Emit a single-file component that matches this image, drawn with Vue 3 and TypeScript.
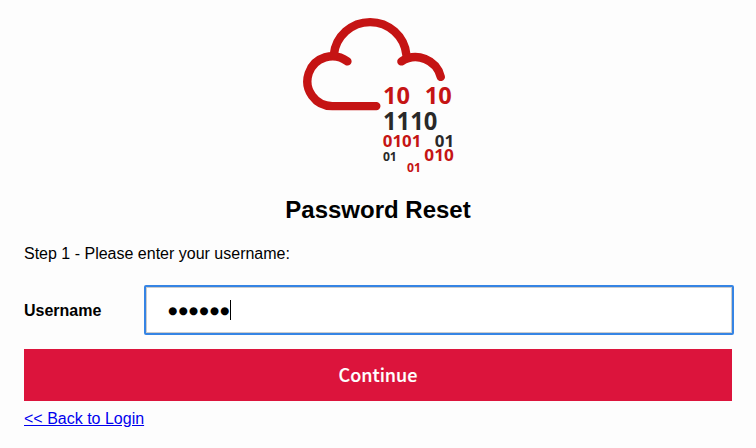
<script setup lang="ts">
import { ref } from 'vue'

interface Digits {
  text: string
  x: number
  y: number
  size: number
  width: number
  dark?: boolean
}

const digits: Digits[] = [
  { text: '10', x: 383, y: 103.8, size: 23.5, width: 27 },
  { text: '10', x: 424.7, y: 103.8, size: 23.5, width: 27 },
  { text: '1110', x: 383, y: 129.5, size: 24.2, width: 54.4, dark: true },
  { text: '0101', x: 382.8, y: 147.2, size: 16.6, width: 38.6 },
  { text: '01', x: 434.8, y: 147.2, size: 16.6, width: 19.3, dark: true },
  { text: '010', x: 424.3, y: 161, size: 16, width: 29.5 },
  { text: '01', x: 382.9, y: 161, size: 12.3, width: 13.9, dark: true },
  { text: '01', x: 407.1, y: 172, size: 12.3, width: 13.9 },
]
const username = ref('secret')
</script>

<template>
  <main class="page">
    <svg class="logo" viewBox="300 16 156 160" aria-hidden="true">
      <g class="cloud">
        <path d="M376.3 106.1H332.3A24.9 24.9 0 1 1 347.4 61.4" />
        <path d="M333.8 54.8A36.5 36.5 0 0 1 406.4 54.8" />
        <path d="M401.4 61.4A26 26 0 0 1 440.8 76.9" />
      </g>
      <text
        v-for="(d, i) in digits"
        :key="i"
        :class="['digits', { dark: d.dark }]"
        :x="d.x"
        :y="d.y"
        :font-size="d.size"
        :textLength="d.width"
        lengthAdjust="spacingAndGlyphs"
      >{{ d.text }}</text>
    </svg>
    <h1 class="title">Password Reset</h1>
    <p class="step">Step 1 - Please enter your username:</p>
    <form class="form" @submit.prevent>
      <div class="row">
        <span class="label">Username</span>
        <div class="field" role="textbox" tabindex="0">
          <span class="mask">{{ '●'.repeat(username.length) }}</span><i class="caret"></i>
        </div>
      </div>
      <button class="submit" type="submit">Continue</button>
    </form>
    <a class="back" href="#">&lt;&lt; Back to Login</a>
  </main>
</template>

<style>
body {
  background: #fdfdfd;
  overflow: hidden;
}
</style>

<style scoped>
.page {
  box-sizing: border-box;
  width: 756px;
  height: 448px;
  padding: 16px 24px 0;
  display: flex;
  flex-direction: column;
  align-items: flex-start;
  font: 16px/18px "Liberation Sans", Arial, sans-serif;
  color: #000;
}
.logo {
  width: 156px;
  height: 160px;
  margin-left: 276px;
}
.cloud {
  fill: none;
  stroke: #c51414;
  stroke-width: 8.4;
  stroke-linecap: round;
}
.digits {
  font-family: "Open Sans", "Noto Sans", sans-serif;
  font-weight: 700;
  fill: #c51414;
}
.dark {
  fill: #292929;
}
.title {
  align-self: center;
  margin: 20px 0 0;
  font-size: 24px;
  line-height: 28px;
  font-weight: 700;
}
.step {
  margin: 21px 0 0;
}
.form {
  width: 708px;
  margin-top: 22px;
}
.row {
  display: flex;
  align-items: center;
  width: 710px;
}
.label {
  width: 120px;
  padding-top: 2px;
  font-weight: 700;
}
.field {
  box-sizing: border-box;
  width: 590px;
  height: 50px;
  padding-left: 21px;
  display: flex;
  align-items: center;
  background: #fff;
  border: 2px solid #3584e4;
  border-radius: 2px;
  box-shadow: inset 0 0 0 1px #ccc;
  outline: none;
}
.mask {
  width: 63px;
  font: 10.5px/18px "DejaVu Sans", sans-serif;
  letter-spacing: 1.25px;
  text-indent: 1px;
  white-space: nowrap;
  padding-bottom: 1px;
}
.caret {
  width: 1px;
  height: 20px;
  background: #000;
}
.submit {
  display: block;
  width: 708px;
  height: 52px;
  margin-top: 14px;
  padding: 0 0 2px;
  border: 0;
  background: #dc143c;
  color: #fff;
  font: 500 18px/50px "Noto Sans CJK SC", sans-serif;
  -webkit-text-stroke: 0.15px #fff;
}
.back {
  margin-top: 9px;
  color: #0000ee;
  text-decoration: underline;
}
</style>
